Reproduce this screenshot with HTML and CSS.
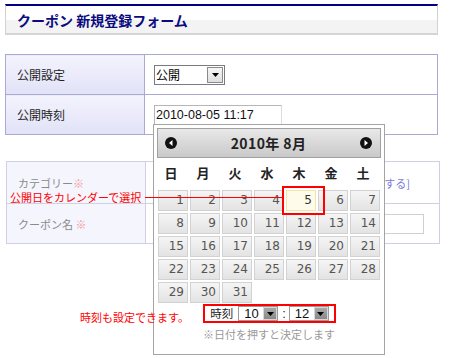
FILE: index.html
```html
<!DOCTYPE html>
<html lang="ja">
<head>
<meta charset="utf-8">
<title>クーポン 新規登録フォーム</title>
<link rel="stylesheet" href="styles.css">
</head>
<body>
<div class="page">
  <div class="header"><h1 class="title">クーポン 新規登録フォーム</h1></div>

  <table class="form form-main">
    <tr>
      <th>公開設定</th>
      <td>
        <span class="select select-pub">
          <span class="select-value">公開</span>
          <span class="select-btn"><svg width="7" height="4" viewBox="0 0 7 4"><path d="M0 0H7L3.5 4Z" fill="#000"/></svg></span>
        </span>
      </td>
    </tr>
    <tr>
      <th>公開時刻</th>
      <td><span class="input input-date">2010-08-05 11:17</span></td>
    </tr>
  </table>

  <table class="form form-sub">
    <tr class="row-cat">
      <th>カテゴリー<span class="req">※</span></th>
      <td class="link-cell"><a class="link">[追加する]</a></td>
    </tr>
    <tr class="row-name">
      <th>クーポン名 <span class="req">※</span></th>
      <td><span class="input input-name"></span></td>
    </tr>
  </table>
</div>

<div class="calendar">
  <div class="cal-head">
    <span class="cal-nav"><svg width="12" height="12" viewBox="0 0 12 12"><circle cx="6" cy="6" r="6" fill="#111"/><path d="M7.5 3V9L4 6Z" fill="#fff"/></svg></span>
    <span class="cal-title">2010年 8月</span>
    <span class="cal-nav"><svg width="12" height="12" viewBox="0 0 12 12"><circle cx="6" cy="6" r="6" fill="#111"/><path d="M4.5 3V9L8 6Z" fill="#fff"/></svg></span>
  </div>
  <div class="cal-week">
    <span>日</span><span>月</span><span>火</span><span>水</span><span>木</span><span>金</span><span>土</span>
  </div>
  <div class="cal-days">
    <span class="day">1</span><span class="day">2</span><span class="day">3</span><span class="day">4</span><span class="day day-today">5</span><span class="day">6</span><span class="day">7</span>
    <span class="day">8</span><span class="day">9</span><span class="day">10</span><span class="day">11</span><span class="day">12</span><span class="day">13</span><span class="day">14</span>
    <span class="day">15</span><span class="day">16</span><span class="day">17</span><span class="day">18</span><span class="day">19</span><span class="day">20</span><span class="day">21</span>
    <span class="day">22</span><span class="day">23</span><span class="day">24</span><span class="day">25</span><span class="day">26</span><span class="day">27</span><span class="day">28</span>
    <span class="day">29</span><span class="day">30</span><span class="day">31</span>
  </div>
  <div class="cal-time-wrap">
    <div class="cal-time">
      <span class="time-label">時刻</span>
      <span class="tsel"><span class="tsel-value">10</span><span class="tsel-btn"><svg width="7" height="4" viewBox="0 0 7 4"><path d="M0 0H7L3.5 4Z" fill="#000"/></svg></span></span>
      <span class="colon">:</span>
      <span class="tsel"><span class="tsel-value">12</span><span class="tsel-btn"><svg width="7" height="4" viewBox="0 0 7 4"><path d="M0 0H7L3.5 4Z" fill="#000"/></svg></span></span>
    </div>
  </div>
  <div class="cal-hint">※日付を押すと決定します</div>
</div>

<div class="note note-date">公開日をカレンダーで選択</div>
<div class="note-line"></div>
<div class="note-box"></div>
<div class="note note-time">時刻も設定できます。</div>
</body>
</html>
```

FILE: styles.css
```css
* { box-sizing: border-box; }

body {
  margin: 0;
  background: #fff;
  font-family: "Noto Sans CJK JP", "DejaVu Sans", sans-serif;
  font-size: 12px;
  color: #222;
}

.page {
  padding: 4px 0 0 5px;
  width: 446px;
}

/* header */
.header {
  width: 433px;
  height: 31px;
  border-top: 2px solid #000080;
  border-left: 1px solid #d2d2d2;
  border-right: 1px solid #d2d2d2;
  border-bottom: 2px solid #d4d4d4;
  background: linear-gradient(#fff 0, #fff 14px, #f3f3f3 14px);
  display: flex;
  align-items: center;
  padding-left: 11px;
}
.title {
  margin: 0;
  font-size: 14px;
  line-height: 1;
  font-weight: bold;
  color: #0b0b7f;
}

/* tables */
.form {
  border-collapse: collapse;
}
.form th {
  text-align: left;
  font-weight: normal;
  padding: 0 0 0 11px;
  width: 139px;
}
.form td {
  padding: 0 0 0 9px;
}

.form-main {
  margin-top: 19px;
  width: 433px;
  border: 1px solid #a9a9d2;
}
.form-main th,
.form-main td {
  border: 1px solid #a9a9d2;
  height: 40px;
}
.form-main th {
  background: linear-gradient(#f3f3fd, #e2e2f8);
  color: #222;
}

.form-sub {
  margin-top: 26px;
  margin-left: 1px;
  width: 434px;
  border: 1px solid #d0d0e4;
}
.form-sub th,
.form-sub td {
  border: 1px solid #d0d0e4;
}
.form-sub th {
  background: #f5f5fd;
  color: #8a8a8a;
  font-size: 11px;
}
.row-cat th, .row-cat td { height: 42px; }
.row-name th, .row-name td { height: 40px; }
.req { color: #f49a9a; }
.form-sub .link-cell {
  text-align: right;
  padding-right: 29px;
}
.link {
  color: #7c7ce0;
  font-size: 11px;
}

/* controls */
.select {
  display: inline-flex;
  vertical-align: middle;
  height: 20px;
  border: 1px solid #7b7b7b;
  background: #fff;
}
.select-pub { width: 71px; }
.select-value {
  flex: 1;
  padding-left: 1px;
  line-height: 18px;
  font-size: 12px;
  color: #000;
}
.select-btn {
  width: 16px;
  margin: 1px;
  border: 1px solid #8a8a8a;
  background: linear-gradient(#f6f6f6, #dedede);
  display: flex;
  align-items: center;
  justify-content: center;
}

.input {
  display: inline-block;
  vertical-align: middle;
  height: 20px;
  border: 1px solid #b6b6b6;
  border-right-color: #dcdcdc;
  border-bottom-color: #dcdcdc;
  background: #fff;
}
.input-date {
  width: 128px;
  padding-left: 1px;
  font-family: "Liberation Sans", Arial, sans-serif;
  font-size: 12.5px;
  line-height: 18px;
  color: #111;
}
.input-name {
  width: 269px;
  border-color: #d0d0d0;
}

/* calendar popup */
.calendar {
  position: absolute;
  left: 153px;
  top: 124px;
  width: 232px;
  height: 231px;
  border: 1px solid #a4a4a4;
  background: #fff;
  padding: 3px;
}
.cal-head {
  height: 30px;
  border: 1px solid #a0a0a0;
  background: linear-gradient(#e8e8e8, #c9c9c9);
  display: flex;
  align-items: center;
  justify-content: space-between;
  padding: 0 8px 0 7px;
}
.cal-nav { display: flex; }
.cal-title {
  font-size: 14px;
  font-weight: bold;
  color: #222;
  letter-spacing: 0.4px;
  line-height: 1;
}
.cal-week {
  display: grid;
  grid-template-columns: repeat(7, 30px);
  column-gap: 2px;
  margin-left: -1px;
  height: 28px;
  align-items: center;
  justify-items: center;
  font-size: 13px;
  font-weight: bold;
  color: #222;
}
.cal-days {
  display: grid;
  grid-template-columns: repeat(7, 30px);
  grid-auto-rows: 21px;
  gap: 2px;
  margin: 4px 0 0 1px;
}
.day {
  border: 1px solid #d2d2d2;
  background: linear-gradient(#f5f5f5, #e3e3e3);
  text-align: right;
  padding-right: 3px;
  font-family: "DejaVu Sans", sans-serif;
  font-size: 12px;
  line-height: 19px;
  color: #555;
}
.day-today {
  background: #fffbea;
  border-color: #f2e4a4;
  color: #333;
}

.cal-time-wrap {
  display: flex;
  justify-content: center;
  margin-top: 1px;
}
.cal-time {
  display: inline-flex;
  align-items: center;
  height: 19px;
  border: 2px solid #f00;
  padding: 0 5px 0 5px;
  margin-left: 1px;
}
.time-label {
  font-size: 11.5px;
  color: #222;
  margin-right: 5px;
  line-height: 1;
}
.colon {
  font-family: "Liberation Sans", Arial, sans-serif;
  font-size: 13px;
  margin: 0 3px 0 4px;
  line-height: 1;
}
.tsel {
  display: inline-flex;
  width: 40px;
  height: 15px;
  border: 1px solid #9a9a9a;
  background: #fff;
}
.tsel-value {
  flex: 1;
  padding-left: 5px;
  font-family: "Liberation Sans", Arial, sans-serif;
  font-size: 13px;
  line-height: 13px;
  color: #111;
}
.tsel-btn {
  width: 14px;
  border: 1px solid #d8d8d8;
  background: linear-gradient(#a8a8a8, #8a8a8a);
  display: flex;
  align-items: center;
  justify-content: center;
}
.cal-hint {
  text-align: center;
  font-size: 11px;
  color: #9a9a9a;
  line-height: 14px;
  margin-top: 4px;
}

/* annotations */
.note {
  position: absolute;
  color: #f00;
  font-size: 11px;
  line-height: 14px;
  white-space: nowrap;
}
.note-date { left: 10px; top: 190px; }
.note-time { left: 80px; top: 310px; }
.note-line {
  position: absolute;
  left: 145px;
  top: 197px;
  width: 137px;
  height: 1px;
  background: #f00;
}
.note-box {
  position: absolute;
  left: 282px;
  top: 186px;
  width: 43px;
  height: 29px;
  border: 2px solid #f00;
}
```
